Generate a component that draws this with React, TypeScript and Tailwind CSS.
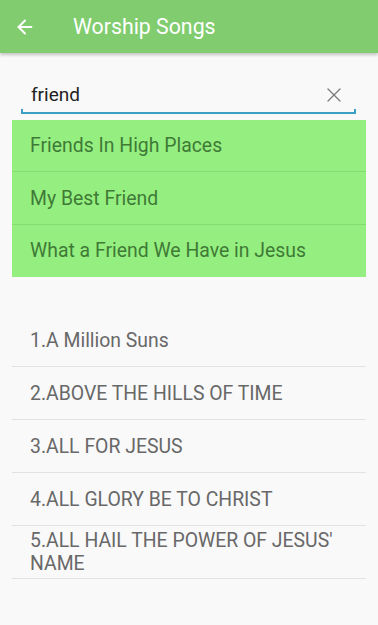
import React, { useState } from 'react';
import { ArrowLeft, X } from 'lucide-react';

const suggestions = ['Friends In High Places', 'My Best Friend', 'What a Friend We Have in Jesus'];

const songs = [
  'A Million Suns',
  'ABOVE THE HILLS OF TIME',
  'ALL FOR JESUS',
  'ALL GLORY BE TO CHRIST',
  "ALL HAIL THE POWER OF JESUS' NAME",
];

export default function App() {
  const [query, setQuery] = useState('friend');

  return (
    <div className="min-h-[625px] bg-[#f9f9fa]" style={{ fontFamily: 'Roboto, "Noto Sans", sans-serif' }}>
      {/* App bar */}
      <header className="h-[53px] bg-[#80cc6f] flex items-center shadow-[0_2px_3px_rgba(0,0,0,0.22)] relative z-10">
        <button className="w-[50px] pl-[14px] flex items-center text-white">
          <ArrowLeft size={22} strokeWidth={2.2} />
        </button>
        <h1 className="ml-[23px] text-white text-[21.3px] leading-none">Worship Songs</h1>
      </header>

      <main className="px-3">
        {/* Search box */}
        <div className="mt-[24px] ml-[9px] mr-[10px] relative">
          <div className="h-[37px] flex items-center border-b-2 border-[#3d9fc4]">
            <input
              value={query}
              onChange={(e) => setQuery(e.target.value)}
              className="flex-1 bg-transparent outline-none text-[19px] text-[#222] pl-[10px] leading-none"
            />
            <button className="mr-[10px] text-[#7a7a7a]">
              <X size={24} strokeWidth={1.3} />
            </button>
          </div>
          <div className="absolute left-0 bottom-0 w-[2px] h-[5px] bg-[#3d9fc4]" />
          <div className="absolute right-0 bottom-0 w-[2px] h-[5px] bg-[#3d9fc4]" />
        </div>

        {/* Suggestions */}
        <ul className="mt-[6px] bg-[#95ef80]">
          {suggestions.map((s, i) => (
            <li
              key={s}
              className={`h-[52.4px] flex items-center pl-[18px] text-[19.4px] text-[#3f7a36] ${
                i < suggestions.length - 1 ? 'border-b border-[#86dc73]' : ''
              }`}
            >
              {s}
            </li>
          ))}
        </ul>

        {/* Song list */}
        <ul className="mt-[37px]">
          {songs.map((s, i) => (
            <li
              key={s}
              className="min-h-[53px] py-[3px] flex items-center pl-[18px] pr-[12px] text-[19.4px] leading-[23px] text-[#686868] border-b border-[#e2e2e2]"
            >
              {i + 1}.{s}
            </li>
          ))}
        </ul>
      </main>
    </div>
  );
}
